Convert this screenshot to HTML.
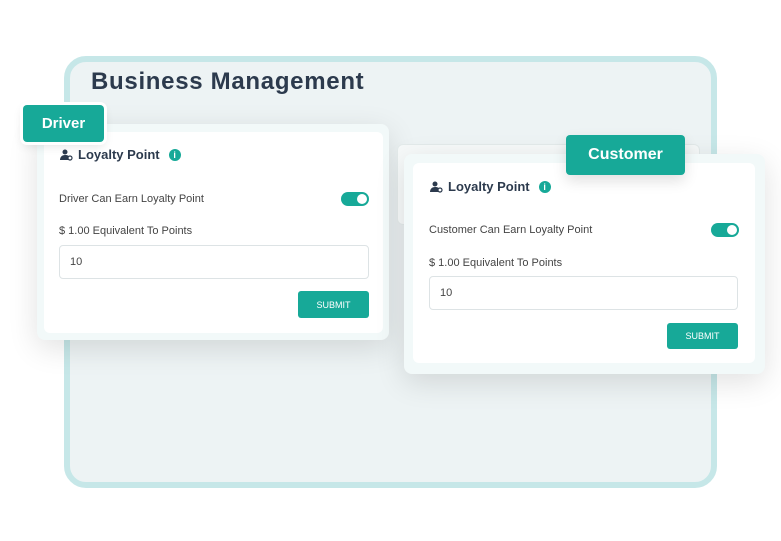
<!DOCTYPE html>
<html><head><style>
*{box-sizing:border-box;margin:0;padding:0}
body{width:781px;height:541px;background:#fff;position:relative;overflow:hidden;font-family:"Liberation Sans",sans-serif;color:#333}
.abs{position:absolute}
.frame{left:64px;top:56px;width:653px;height:432px;border:6px solid #c6e7e8;border-radius:22px;background:#edf3f4}
.title{left:91px;top:68px;font-size:24px;font-weight:bold;color:#2c3a4d;letter-spacing:.7px}
.tab{background:#17a998;color:#fff;font-weight:bold;border-radius:4px;box-shadow:0 0 0 3px #fff,0 4px 10px rgba(0,0,0,.12);display:flex;align-items:center;justify-content:center}
.outer{background:#f2f9f9;border-radius:8px;box-shadow:0 8px 30px rgba(0,0,0,.12)}
.card{background:#fff;border-radius:6px}
.h{font-size:13px;font-weight:bold;color:#2c3a4d;display:flex;align-items:center;gap:5px}
.info{width:12px;height:12px;border-radius:50%;background:#17a998;color:#fff;font-size:9px;display:inline-flex;align-items:center;justify-content:center;margin-left:4px}
.lbl{font-size:11px;color:#444}
.tog{width:28px;height:14px;border-radius:7px;background:#17a998}
.tog:after{content:"";position:absolute;right:2px;top:2px;width:10px;height:10px;border-radius:50%;background:#fff}
.inp{border:1px solid #dde3e5;border-radius:4px;font-size:11px;color:#444;padding-left:10px;display:flex;align-items:center;background:#fff}
.btn{background:#17a998;color:#fff;font-size:9px;border-radius:3px;display:flex;align-items:center;justify-content:center}
</style></head><body>
<div class="abs frame"></div>
<div class="abs title">Business Management</div>

<div class="abs outer" style="left:37px;top:124px;width:352px;height:216px"></div>
<div class="abs card" style="left:44px;top:132px;width:339px;height:201px"></div>
<div class="abs tab" style="left:23px;top:105px;width:81px;height:37px;font-size:15px">Driver</div>
<div class="abs h" style="left:60px;top:147px"><svg width="13" height="12" viewBox="0 0 13 12"><circle cx="5" cy="3" r="2.5" fill="#2c3a4d"/><path d="M0 11c0-3 2-5 5-5s4 1 4 2v3z" fill="#2c3a4d"/><circle cx="10" cy="9" r="2" fill="#fff" stroke="#2c3a4d" stroke-width="1.2"/></svg>Loyalty Point<span class="info">i</span></div>
<div class="abs lbl" style="left:59px;top:193px">Driver Can Earn Loyalty Point</div>
<div class="abs tog" style="left:341px;top:192px"></div>
<div class="abs lbl" style="left:59px;top:225px">$ 1.00 Equivalent To Points</div>
<div class="abs inp" style="left:59px;top:245px;width:310px;height:34px">10</div>
<div class="abs btn" style="left:298px;top:291px;width:71px;height:27px">SUBMIT</div>

<div class="abs" style="left:397px;top:144px;width:303px;height:81px;background:#f6f9f9;border-radius:6px;border:1px solid #e3eaea"></div>
<div class="abs outer" style="left:404px;top:154px;width:361px;height:220px"></div>
<div class="abs card" style="left:413px;top:163px;width:342px;height:200px"></div>
<div class="abs tab" style="left:566px;top:135px;width:119px;height:40px;font-size:16px;box-shadow:0 6px 14px rgba(0,0,0,.12)">Customer</div>
<div class="abs h" style="left:430px;top:179px"><svg width="13" height="12" viewBox="0 0 13 12"><circle cx="5" cy="3" r="2.5" fill="#2c3a4d"/><path d="M0 11c0-3 2-5 5-5s4 1 4 2v3z" fill="#2c3a4d"/><circle cx="10" cy="9" r="2" fill="#fff" stroke="#2c3a4d" stroke-width="1.2"/></svg>Loyalty Point<span class="info">i</span></div>
<div class="abs lbl" style="left:429px;top:224px">Customer Can Earn Loyalty Point</div>
<div class="abs tog" style="left:711px;top:223px"></div>
<div class="abs lbl" style="left:429px;top:257px">$ 1.00 Equivalent To Points</div>
<div class="abs inp" style="left:429px;top:276px;width:309px;height:34px">10</div>
<div class="abs btn" style="left:667px;top:323px;width:71px;height:26px">SUBMIT</div>
</body></html>
